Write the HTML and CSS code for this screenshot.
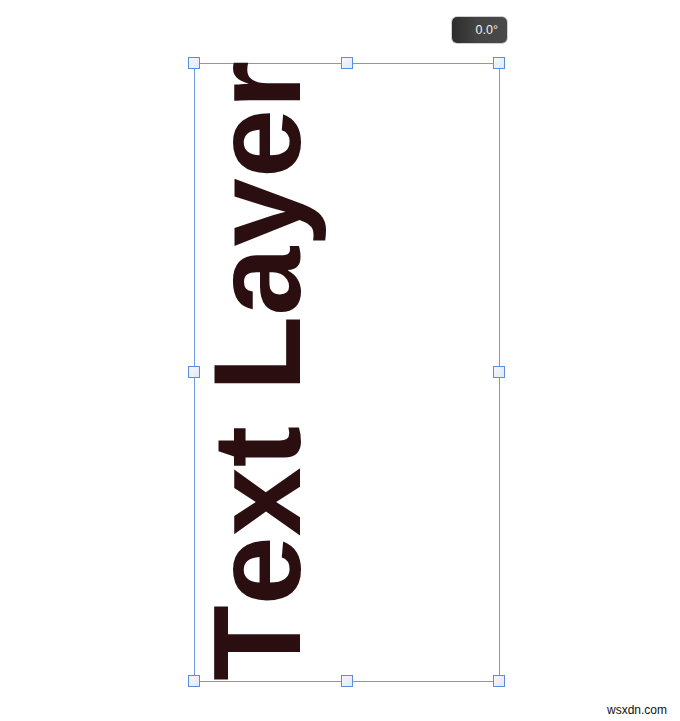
FILE: index.html
```html
<!DOCTYPE html>
<html lang="en">
<head>
    <meta charset="UTF-8">
    <meta name="viewport" content="width=device-width, initial-scale=1.0">
    <title>Text Layer</title>
    <link rel="stylesheet" href="styles.css">
</head>
<body>

    <div class="canvas">
        <!-- rotation readout -->
        <div class="angle">0.0°</div>

        <!-- selected layer with transform handles -->
        <div class="frame">
            <span class="label">Text Layer</span>

            <i class="handle tl"></i>
            <i class="handle tm"></i>
            <i class="handle tr"></i>
            <i class="handle ml"></i>
            <i class="handle mr"></i>
            <i class="handle bl"></i>
            <i class="handle bm"></i>
            <i class="handle br"></i>
        </div>

        <div class="watermark">wsxdn.com</div>
    </div>

</body>
</html>
```

FILE: styles.css
```css
body, html {
    margin: 0;
    padding: 0;
    height: 100%;
    background: #fff;
    font-family: "Liberation Sans", Arial, sans-serif;
    overflow: hidden;
}

.canvas {
    position: relative;
    width: 680px;
    height: 721px;
}

/* Angle badge */
.angle {
    position: absolute;
    left: 452px;
    top: 17px;
    width: 55px;
    height: 26px;
    box-sizing: border-box;
    padding-right: 9px;
    border-radius: 5px;
    background: linear-gradient(90deg, #2c2c2c 0%, #444 45%, #4a4a4a 100%);
    box-shadow: 0 0 0 1px #d0d0d0;
    color: #f2f2f2;
    font-size: 12.5px;
    line-height: 26px;
    text-align: right;
}

/* Layer bounding box */
.frame {
    position: absolute;
    left: 194px;
    top: 63px;
    width: 306px;
    height: 619px;
    box-sizing: border-box;
    border: 1px solid #6e9be4;
}

.label {
    position: absolute;
    left: 0;
    top: 617px;
    transform-origin: 0 0;
    transform: rotate(-90deg);
    white-space: nowrap;
    font-weight: bold;
    font-size: 124px;
    font-kerning: none;
    line-height: 1;
    color: #2b0e10;
}

.handle {
    position: absolute;
    width: 12px;
    height: 12px;
    box-sizing: border-box;
    border: 1px solid #5a8ddf;
    background: linear-gradient(135deg, #f4f7fc 0%, #e2e9f6 100%);
    margin: -6px 0 0 -6px;
}

.handle.tl { left: -1px;  top: -1px; }
.handle.tm { left: 152px; top: -1px; }
.handle.tr { left: 304px; top: -1px; }
.handle.ml { left: -1px;  top: 308px; }
.handle.mr { left: 304px; top: 308px; }
.handle.bl { left: -1px;  top: 617px; }
.handle.bm { left: 152px; top: 617px; }
.handle.br { left: 304px; top: 617px; }

.watermark {
    position: absolute;
    left: 607px;
    top: 703px;
    font-size: 12px;
    color: #111;
}
```
